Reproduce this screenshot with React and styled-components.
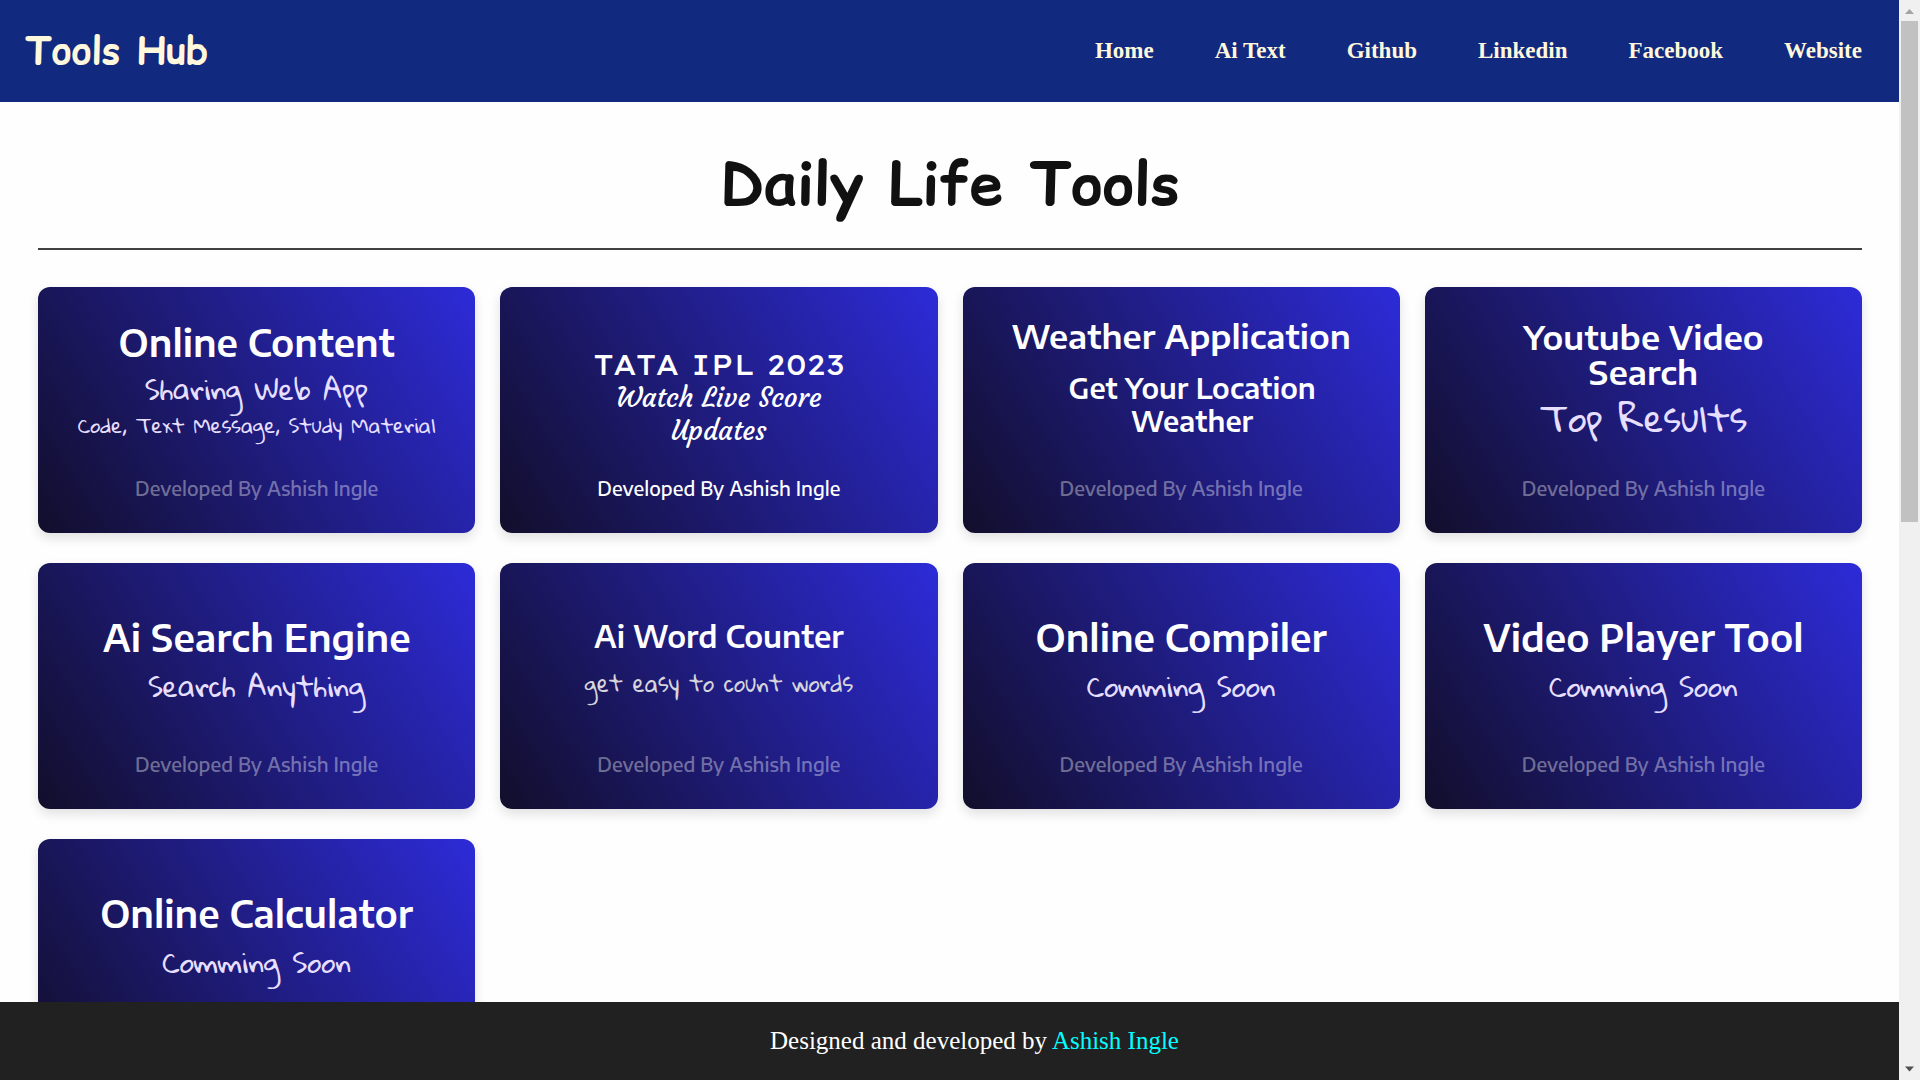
import React from "react";
import styled, { createGlobalStyle } from "styled-components";

const sans = `"Encode Sans Semi Expanded", "Encode Sans", "Noto Sans", sans-serif`;
const comic = `"Comic Relief", "Comic Sans MS", "Comic Neue", "Noto Sans", sans-serif`;
const hand = `"Gloria Hallelujah", Lato, sans-serif`;
const serif = `"Times New Roman", "Liberation Serif", serif`;

const GlobalStyle = createGlobalStyle`
  *, *::before, *::after { box-sizing: border-box; }
  html, body, #root { height: 100%; }
  body { margin: 0; background: #fefefe; font-family: ${serif}; overflow: hidden; }
  h1, h2, p { margin: 0; }
  a { color: inherit; text-decoration: none; }
`;

const Window = styled.div`
  display: flex;
  height: 100vh;
`;

const Page = styled.div`
  flex: 1;
  min-width: 0;
  display: flex;
  flex-direction: column;
`;

const Header = styled.header`
  flex: none;
  display: flex;
  align-items: center;
  justify-content: space-between;
  padding: 24px 37px 24px 25px;
  background: #11297f;
  color: #fff8dc;
`;

const Brand = styled.a`
  font: 700 38px/54px ${comic};
`;

const Nav = styled.nav`
  display: flex;
  gap: 61px;
  font: 700 23px/26px ${serif};
`;

const Main = styled.main`
  flex: 1;
  min-height: 0;
  overflow: hidden;
  padding: 0 37px 0 38px;
`;

const Heading = styled.h1`
  padding: 38px 0 20px;
  border-bottom: 2px solid #404040;
  color: #111;
  text-align: center;
  font: 700 60px/88px ${comic};
`;

const Grid = styled.div`
  display: grid;
  grid-template-columns: repeat(4, minmax(0, 1fr));
  gap: 30px 25px;
  margin-top: 37px;
`;

const Card = styled.a`
  display: flex;
  flex-direction: column;
  height: 246px;
  padding: ${(p) => p.$top}px 0 29px;
  border-radius: 12px;
  background: linear-gradient(58deg, #120e2b, #2d2bd8);
  box-shadow: 0 5px 12px rgba(0, 0, 0, 0.12);
  color: #fff;
  text-align: center;
  white-space: pre-line;
`;

const faces = {
  sans: { family: sans, weight: 600, color: "#fff" },
  hand: { family: hand, weight: 400, color: "#e6dfff" },
  plain: { family: hand, weight: 400, color: "#d6d5dc" },
  wide: { family: `"Lexend Giga", "DejaVu Sans", sans-serif`, weight: 500, color: "#fff" },
  script: { family: `Courgette, ${serif}`, weight: 400, color: "#fff" },
};

const Line = styled.p`
  font-family: ${(p) => faces[p.$face].family};
  font-weight: ${(p) => faces[p.$face].weight};
  color: ${(p) => faces[p.$face].color};
  font-size: ${(p) => p.$size}px;
  line-height: ${(p) => p.$lead}px;
  padding-left: ${(p) => p.$indent || 0}px;
`;

const Title = styled(Line).attrs({ as: "h2" })``;

const Credit = styled.p`
  margin-top: auto;
  color: ${(p) => (p.$bright ? "#fff" : "rgba(255, 255, 255, 0.4)")};
  font: 500 19px/32px ${sans};
`;

const Footer = styled.footer`
  flex: none;
  padding-left: 50px;
  background: #212121;
  color: #fff;
  text-align: center;
  font: 400 25px/78px ${serif};
`;

const Author = styled.a`
  && { color: #0ff; }
`;

const ScrollBar = styled.div`
  flex: none;
  width: 21px;
  display: flex;
  flex-direction: column;
  align-items: center;
  background: #f0f0f0;
`;

const Arrow = styled.svg`
  display: block;
  width: 21px;
  height: 21px;
  fill: ${(p) => p.$fill};
`;

const Thumb = styled.div`
  width: 17px;
  height: 501px;
  margin-bottom: auto;
  background: #c1c1c1;
`;

const links = ["Home", "Ai Text", "Github", "Linkedin", "Facebook", "Website"];

const big = (text) => ({ face: "sans", size: 37, lead: 54, text });
const note = (text) => ({ face: "hand", size: 28, lead: 44, text });

const cards = [
  {
    top: 28,
    title: big("Online Content"),
    lines: [
      { face: "hand", size: 28, lead: 40, text: "Sharing Web App" },
      { face: "hand", size: 20, lead: 32, text: "Code, Text Message, Study Material" },
    ],
  },
  {
    top: 61,
    bright: true,
    title: { face: "wide", size: 28, lead: 33, text: "TATA IPL 2023" },
    lines: [{ face: "script", size: 27, lead: 33, text: "Watch Live Score\nUpdates" }],
  },
  {
    top: 14,
    title: { face: "sans", size: 33, lead: 70, text: "Weather Application" },
    lines: [{ face: "sans", size: 28, lead: 33, indent: 22, text: "Get Your Location\nWeather" }],
  },
  {
    top: 32,
    title: { face: "sans", size: 33, lead: 35, text: "Youtube Video\nSearch" },
    lines: [{ face: "hand", size: 36, lead: 56, text: "Top Results" }],
  },
  { top: 47, title: big("Ai Search Engine"), lines: [note("Search Anything")] },
  {
    top: 45,
    title: { face: "sans", size: 30, lead: 56, text: "Ai Word Counter" },
    lines: [{ face: "plain", size: 22, lead: 38, text: "get easy to count words" }],
  },
  { top: 47, title: big("Online Compiler"), lines: [note("Comming Soon")] },
  { top: 47, title: big("Video Player Tool"), lines: [note("Comming Soon")] },
  { top: 47, title: big("Online Calculator"), lines: [note("Comming Soon")] },
];

const textProps = (t) => ({ $face: t.face, $size: t.size, $lead: t.lead, $indent: t.indent });

function ToolCard({ card }) {
  return (
    <Card href="#" $top={card.top}>
      <Title {...textProps(card.title)}>{card.title.text}</Title>
      {card.lines.map((line) => (
        <Line key={line.text} {...textProps(line)}>{line.text}</Line>
      ))}
      <Credit $bright={card.bright}>Developed By Ashish Ingle</Credit>
    </Card>
  );
}

export default function App() {
  return (
    <>
      <GlobalStyle />
      <Window>
        <Page>
          <Header>
            <Brand href="#">Tools Hub</Brand>
            <Nav>
              {links.map((l) => (
                <a key={l} href="#">{l}</a>
              ))}
            </Nav>
          </Header>
          <Main>
            <Heading>Daily Life Tools</Heading>
            <Grid>
              {cards.map((c) => (
                <ToolCard key={c.title.text} card={c} />
              ))}
            </Grid>
          </Main>
          <Footer>
            Designed and developed by <Author href="#">Ashish Ingle</Author>
          </Footer>
        </Page>
        <ScrollBar aria-hidden="true">
          <Arrow viewBox="0 0 21 21" $fill="#a3a3a3"><path d="M6 14 10.500 9 15 14z" /></Arrow>
          <Thumb />
          <Arrow viewBox="0 0 21 21" $fill="#505050"><path d="M6 7.500h9L10.500 12.500z" /></Arrow>
        </ScrollBar>
      </Window>
    </>
  );
}
